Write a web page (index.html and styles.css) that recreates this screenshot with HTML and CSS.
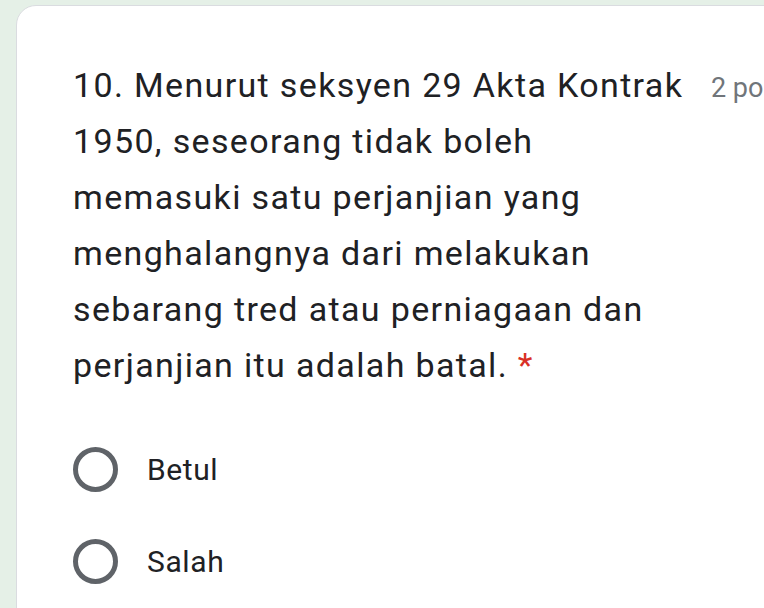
FILE: index.html
```html
<!DOCTYPE html>
<html lang="ms">
<head>
<meta charset="utf-8">
<title>Soalan 10</title>
<link rel="stylesheet" href="styles.css">
</head>
<body>
<div class="card">
  <div class="header">
    <div class="title">10. Menurut seksyen 29 Akta Kontrak 1950, seseorang tidak boleh memasuki satu perjanjian yang menghalangnya dari melakukan sebarang tred atau perniagaan dan perjanjian itu adalah batal. <span class="req">*</span></div>
    <div class="points">2 points</div>
  </div>
  <div class="options">
    <label class="option"><span class="radio"></span><span class="label">Betul</span></label>
    <label class="option"><span class="radio"></span><span class="label">Salah</span></label>
  </div>
</div>
</body>
</html>
```
FILE: styles.css
```css
html, body {
  margin: 0;
  padding: 0;
  width: 764px;
  height: 608px;
  overflow: hidden;
  background: #e5f0e7;
}
body {
  font-family: Roboto, "Liberation Sans", sans-serif;
  color: #202124;
}
.card {
  margin: 5px 0 0 16px;
  width: 800px;
  height: 700px;
  box-sizing: border-box;
  background: #fff;
  border: 1px solid #dadce0;
  border-radius: 20px;
  padding: 51px 0 0 56px;
}
.header {
  display: flex;
  align-items: baseline;
  gap: 23px;
}
.title {
  width: 615px;
  flex: none;
  font-size: 34px;
  line-height: 56px;
  letter-spacing: 1.35px;
}
.req {
  color: #d93025;
}
.points {
  flex: none;
  font-size: 27px;
  letter-spacing: 0;
  color: #70757a;
  white-space: nowrap;
}
.options {
  margin-top: 30px;
  display: flex;
  flex-direction: column;
}
.option {
  display: flex;
  align-items: center;
  height: 92px;
}
.radio {
  width: 45px;
  height: 45px;
  box-sizing: border-box;
  border: 5px solid #5f6368;
  border-radius: 50%;
  flex: none;
}
.label {
  margin-left: 29px;
  font-size: 30px;
  letter-spacing: 0.6px;
}
```
